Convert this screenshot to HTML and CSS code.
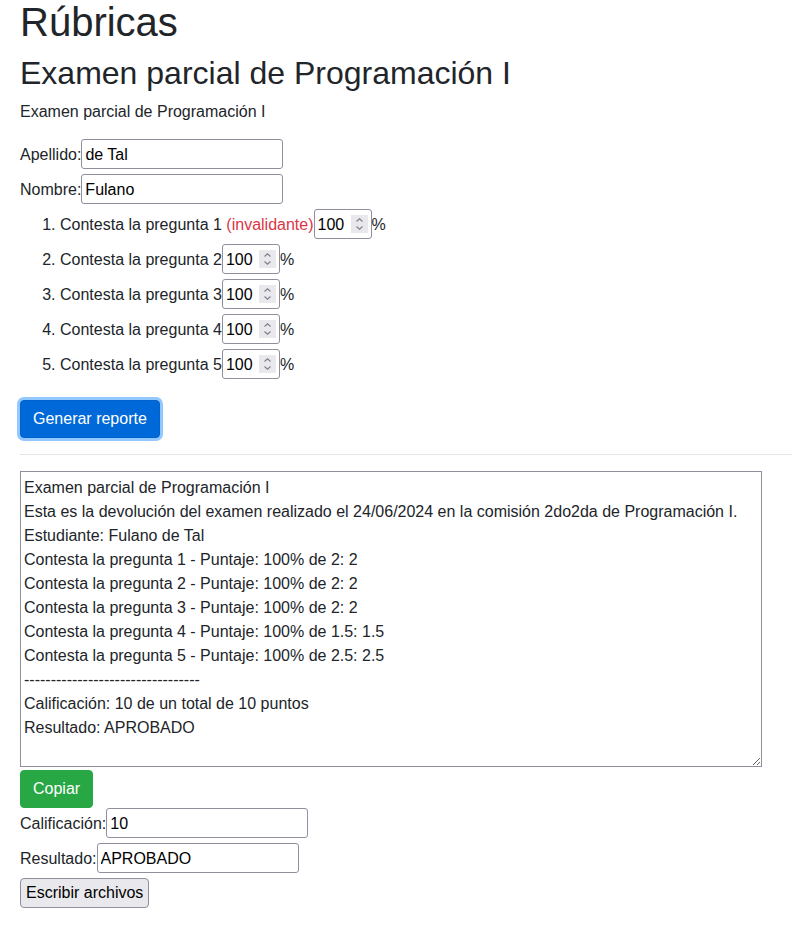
FILE: index.html
```html
<!DOCTYPE html>
<html lang="es">
<head>
<meta charset="utf-8">
<title>Rúbricas</title>
<link rel="stylesheet" href="styles.css">
</head>
<body>
<div class="page">
  <h1 class="title">Rúbricas</h1>
  <h2 class="subtitle">Examen parcial de Programación I</h2>
  <p class="desc">Examen parcial de Programación I</p>

  <form class="form">
    <div class="field"><label>Apellido:</label><input class="text-input" type="text" value="de Tal"></div>
    <div class="field"><label>Nombre:</label><input class="text-input" type="text" value="Fulano"></div>

    <ol class="items">
      <li class="item"><span>Contesta la pregunta 1&nbsp;<span class="invalid">(invalidante)</span></span><span class="num"><input class="num-input" type="number" value="100"><svg class="spin" width="17" height="18" viewBox="0 0 17 18"><rect width="17" height="18" fill="#e9e9ed"/><path d="M5.5 6.5 L8.5 3.8 L11.5 6.5 M5.5 11.5 L8.5 14.2 L11.5 11.5" fill="none" stroke="#7d7d8a" stroke-width="1.1"/></svg></span><span class="pct">%</span></li>
      <li class="item"><span>Contesta la pregunta 2</span><span class="num"><input class="num-input" type="number" value="100"><svg class="spin" width="17" height="18" viewBox="0 0 17 18"><rect width="17" height="18" fill="#e9e9ed"/><path d="M5.5 6.5 L8.5 3.8 L11.5 6.5 M5.5 11.5 L8.5 14.2 L11.5 11.5" fill="none" stroke="#7d7d8a" stroke-width="1.1"/></svg></span><span class="pct">%</span></li>
      <li class="item"><span>Contesta la pregunta 3</span><span class="num"><input class="num-input" type="number" value="100"><svg class="spin" width="17" height="18" viewBox="0 0 17 18"><rect width="17" height="18" fill="#e9e9ed"/><path d="M5.5 6.5 L8.5 3.8 L11.5 6.5 M5.5 11.5 L8.5 14.2 L11.5 11.5" fill="none" stroke="#7d7d8a" stroke-width="1.1"/></svg></span><span class="pct">%</span></li>
      <li class="item"><span>Contesta la pregunta 4</span><span class="num"><input class="num-input" type="number" value="100"><svg class="spin" width="17" height="18" viewBox="0 0 17 18"><rect width="17" height="18" fill="#e9e9ed"/><path d="M5.5 6.5 L8.5 3.8 L11.5 6.5 M5.5 11.5 L8.5 14.2 L11.5 11.5" fill="none" stroke="#7d7d8a" stroke-width="1.1"/></svg></span><span class="pct">%</span></li>
      <li class="item"><span>Contesta la pregunta 5</span><span class="num"><input class="num-input" type="number" value="100"><svg class="spin" width="17" height="18" viewBox="0 0 17 18"><rect width="17" height="18" fill="#e9e9ed"/><path d="M5.5 6.5 L8.5 3.8 L11.5 6.5 M5.5 11.5 L8.5 14.2 L11.5 11.5" fill="none" stroke="#7d7d8a" stroke-width="1.1"/></svg></span><span class="pct">%</span></li>
    </ol>

    <button type="button" class="btn btn-primary">Generar reporte</button>
  </form>

  <hr class="sep">

  <textarea class="report">Examen parcial de Programación I
Esta es la devolución del examen realizado el 24/06/2024 en la comisión 2do2da de Programación I.
Estudiante: Fulano de Tal
Contesta la pregunta 1 - Puntaje: 100% de 2: 2
Contesta la pregunta 2 - Puntaje: 100% de 2: 2
Contesta la pregunta 3 - Puntaje: 100% de 2: 2
Contesta la pregunta 4 - Puntaje: 100% de 1.5: 1.5
Contesta la pregunta 5 - Puntaje: 100% de 2.5: 2.5
---------------------------------
Calificación: 10 de un total de 10 puntos
Resultado: APROBADO</textarea>
  <button type="button" class="btn btn-success">Copiar</button>
  <div class="field"><label>Calificación:</label><input class="text-input" type="text" value="10"></div>
  <div class="field"><label>Resultado:</label><input class="text-input" type="text" value="APROBADO"></div>
  <button type="button" class="btn-plain">Escribir archivos</button>
</div>
</body>
</html>
```

FILE: styles.css
```css
* { box-sizing: border-box; }

html, body {
  margin: 0;
  padding: 0;
  background: #fff;
}

body {
  font-family: "Liberation Sans", Arial, sans-serif;
  font-size: 16px;
  line-height: 1.5;
  color: #212529;
}

.page {
  padding-left: 20px;
}

.title {
  font-size: 40px;
  font-weight: 400;
  line-height: 1.2;
  margin: -2px 0 8px;
}

.subtitle {
  font-size: 32px;
  font-weight: 400;
  line-height: 1.2;
  margin: 0 0 8px;
}

.desc {
  margin: 0 0 15px;
}

.form {
  margin: 0;
}

.field {
  display: flex;
  align-items: center;
  height: 30px;
  margin-bottom: 5px;
}

.field > label {
  padding-top: 2px;
}

.text-input {
  width: 202px;
  height: 30px;
  border: 1px solid #8f8f9d;
  border-radius: 3px;
  padding: 2px 3px 0;
  font-family: "Liberation Sans", Arial, sans-serif;
  font-size: 16px;
  color: #000;
  background: #fff;
  outline: none;
}

.items {
  margin: 0 0 21px;
  padding-left: 40px;
}

.item {
  height: 30px;
  margin-bottom: 5px;
  line-height: 32px;
}

.invalid {
  color: #dc3545;
}

.num {
  display: inline-flex;
  align-items: center;
  vertical-align: top;
  width: 58px;
  height: 30px;
  border: 1px solid #8f8f9d;
  border-radius: 3px;
  padding: 0 4px 0 3px;
  background: #fff;
}

.num-input {
  width: 33px;
  height: 28px;
  border: 0;
  padding: 2px 0 0;
  margin: 0;
  font-family: "Liberation Sans", Arial, sans-serif;
  font-size: 16px;
  color: #000;
  background: transparent;
  outline: none;
  -moz-appearance: textfield;
}

.num-input::-webkit-inner-spin-button,
.num-input::-webkit-outer-spin-button {
  -webkit-appearance: none;
  margin: 0;
}

.spin {
  display: block;
  flex: none;
}

.btn {
  display: block;
  height: 38px;
  padding: 0 12px;
  border: 1px solid transparent;
  border-radius: 4px;
  font-family: "Liberation Sans", Arial, sans-serif;
  font-size: 16px;
  line-height: 36px;
  color: #fff;
  cursor: pointer;
}

.btn-primary {
  background: #0069d9;
  border-color: #0062cc;
  box-shadow: 0 0 0 3px rgba(38, 143, 255, 0.5);
}

.btn-success {
  background: #28a745;
  border-color: #28a745;
  width: 73px;
  margin-bottom: 0;
}

.sep {
  border: 0;
  border-top: 1px solid rgba(0, 0, 0, 0.1);
  margin: 16px 0;
}

.report {
  display: block;
  width: 742px;
  height: 296px;
  margin: 0 0 3px;
  padding: 4px 3px 3px;
  border: 1px solid #8f8f9d;
  border-radius: 0;
  font-family: "Liberation Sans", Arial, sans-serif;
  font-size: 16px;
  line-height: 24px;
  color: #212529;
  resize: both;
  outline: none;
}

.btn-plain {
  display: block;
  height: 30px;
  padding: 0 5px;
  border: 1px solid #8f8f9d;
  border-radius: 4px;
  background: #e9e9ed;
  font-family: "Liberation Sans", Arial, sans-serif;
  font-size: 16px;
  color: #000;
}
```
